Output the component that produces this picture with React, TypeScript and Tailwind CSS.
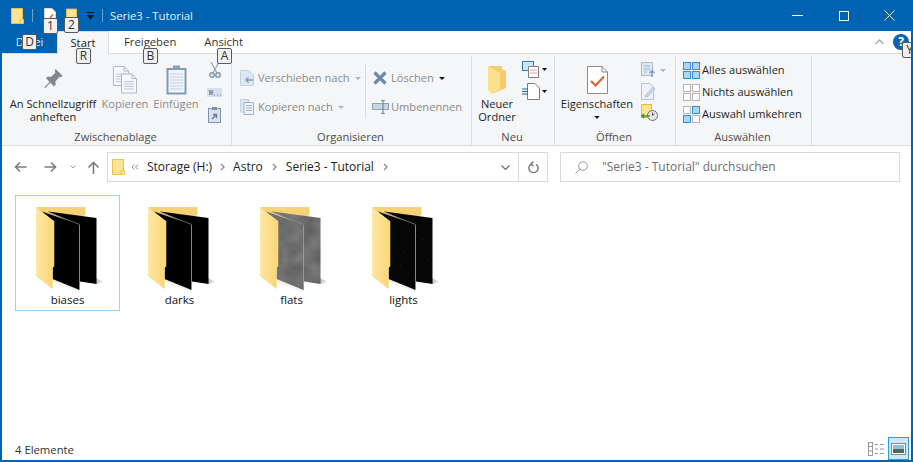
import type { ReactNode } from 'react'

const font = { fontFamily: '"Open Sans", "Noto Sans", sans-serif' }

function KeyTip({ label, className }: { label: string; className: string }) {
  return (
    <span className={`absolute z-10 flex h-[16px] w-[15px] items-center justify-center rounded-[2px] border border-[#5a5a5a] bg-[#f0f0f0] text-[12px] leading-none text-[#333] ${className}`}>
      {label}
    </span>
  )
}

function SmallFolder({ className }: { className: string }) {
  return (
    <svg className={className} viewBox="0 0 13 16">
      <path d="M0.5 0.5H11.5V15.5H0.5Z" fill="#fde48f" stroke="#ecc14f" />
      <path d="M9 11.5H12.5V15.5H9Z" fill="#fde48f" stroke="#ecc14f" />
    </svg>
  )
}

function BigFolder({ page, dots, noise }: { page: string; dots?: boolean; noise?: boolean }) {
  return (
    <svg className="h-[86px] w-[66px]" viewBox="0 0 66 86">
      <defs>
        <linearGradient id="shade" x1="0" x2="1" y1="0" y2="0">
          <stop offset="0" stopColor="#000" stopOpacity="0.25" />
          <stop offset="1" stopColor="#000" stopOpacity="0" />
        </linearGradient>
        <linearGradient id="flap" x1="0" x2="1" y1="0" y2="0.1">
          <stop offset="0" stopColor="#fee8a6" />
          <stop offset="1" stopColor="#f9d778" />
        </linearGradient>
        <filter id="blotch" x="0" y="0" width="100%" height="100%">
          <feTurbulence type="fractalNoise" baseFrequency="0.07" numOctaves="2" seed="4" />
          <feColorMatrix values="0 0 0 0 0  0 0 0 0 0  0 0 0 0 0  0.35 0 0 0 -0.08" />
        </filter>
        <clipPath id="pages">
          <path d="M12 4.5L60.5 11V77L44 74.5V19Z" />
          <path d="M6 4.5L43.5 17.5V83L16.5 72V28Z" />
        </clipPath>
      </defs>
      <path d="M0 0H49.5V8L16 30Z" fill="#f5d375" />
      <path d="M60 71L69 75L60 77Z" fill="url(#shade)" />
      <path d="M16 72L43 83L43 85L16 75Z" fill="#000" opacity="0.06" />
      <path d="M12 4.5L60.5 11V77L44 74.5V19Z" fill={page} />
      <path d="M6 4.5L43.5 17.5V83L16.5 72V28Z" fill={page} />
      {noise && (
        <g clipPath="url(#pages)">
          <rect width="66" height="86" filter="url(#blotch)" />
        </g>
      )}
      <path d="M12 5L43.5 17.5V83" fill="none" stroke="#8c8c8c" strokeWidth="0.7" />
      {dots && (
        <g fill="#5f5f5f">
          <rect x="24" y="30" width="0.6" height="0.6" />
          <rect x="31" y="44" width="0.6" height="0.6" />
          <rect x="38" y="26" width="0.6" height="0.6" />
          <rect x="28" y="58" width="0.6" height="0.6" />
          <rect x="50" y="32" width="0.6" height="0.6" />
          <rect x="55" y="52" width="0.6" height="0.6" />
          <rect x="36" y="66" width="0.6" height="0.6" />
        </g>
      )}
      <path d="M0 0L18.3 14.3V59.3L16.7 61V82L0 69.3Z" fill="url(#flap)" />
    </svg>
  )
}

function FolderTile({ name, page, selected, dots, noise }: { name: string; page: string; selected?: boolean; dots?: boolean; noise?: boolean }) {
  return (
    <div className={`flex h-[116px] w-[105px] flex-col items-center border pt-[11px] ${selected ? 'border-[#99d1ff]' : 'border-transparent'}`}>
      <div className="ml-[2px] h-[85px]">
        <BigFolder page={page} dots={dots} noise={noise} />
      </div>
      <span className="text-[11.5px] leading-[16px] text-[#111]">{name}</span>
    </div>
  )
}

function Group({ label, width, children }: { label: string; width: string; children: ReactNode }) {
  return (
    <div className={`relative flex flex-col border-r border-[#dcdddf] ${width}`}>
      <div className="flex h-[73px]">{children}</div>
      <div className="pr-[2px] text-center text-[11.1px] leading-[15px] text-[#4c4c4c]">{label}</div>
    </div>
  )
}

function LargeButton({ icon, lines, disabled, width }: { icon: ReactNode; lines: string[]; disabled?: boolean; width: string }) {
  return (
    <div className={`flex flex-col items-center pt-[6px] text-[11.1px] leading-[13px] ${width} ${disabled ? 'text-[#8a8a8a]' : 'text-[#1e1e1e]'}`}>
      <div className="flex h-[35px] items-center">{icon}</div>
      {lines.map(line => (
        <span key={line} className="whitespace-nowrap">{line}</span>
      ))}
    </div>
  )
}

function SmallButton({ icon, label, disabled, caret }: { icon: ReactNode; label: string; disabled?: boolean; caret?: string }) {
  return (
    <div className={`flex h-[22px] items-center whitespace-nowrap text-[11.1px] ${disabled ? 'text-[#8a8a8a]' : 'text-[#1e1e1e]'}`}>
      <span className="flex w-[20px] items-center justify-center">{icon}</span>
      <span className="ml-[1px]">{label}</span>
      {caret && (
        <svg className="ml-[5px] h-[3px] w-[6px]" viewBox="0 0 6 3">
          <path d="M0 0H6L3 3Z" fill={caret} />
        </svg>
      )}
    </div>
  )
}

function SelectIcon({ cells }: { cells: boolean[] }) {
  return (
    <svg className="h-[17px] w-[17px]" viewBox="0 0 17 17">
      {cells.map((on, i) => {
        const x = i % 2 === 0 ? 0.5 : 9.5
        const y = i < 2 ? 0.5 : 9.5
        return <rect key={i} x={x} y={y} width="7" height="7" fill={on ? '#a8d7f7' : '#fff'} stroke={on ? '#2e8fd6' : '#b4b4b4'} />
      })}
    </svg>
  )
}

function Caret({ className }: { className: string }) {
  return (
    <svg className={className} viewBox="0 0 7 4">
      <path d="M0 0H7L3.5 4Z" fill="#111" />
    </svg>
  )
}

function Crumb({ className }: { className: string }) {
  return (
    <svg className={`h-[8px] w-[5px] ${className}`} viewBox="0 0 5 8">
      <path d="M1 1L4 4L1 7" fill="none" stroke="#8a8a8a" strokeWidth="1.3" />
    </svg>
  )
}

function PageIcon({ className, fill = '#f7f9fc', stroke = '#adb9c9' }: { className: string; fill?: string; stroke?: string }) {
  return (
    <svg className={className} viewBox="0 0 16 20">
      <path d="M0.5 0.5H11L15.5 5V19.5H0.5Z" fill={fill} stroke={stroke} />
      <path d="M11 0.5V5H15.5" fill="none" stroke={stroke} />
      <path d="M3 8H13M3 10.5H13M3 13H13M3 15.5H13" stroke={stroke} strokeWidth="0.8" />
    </svg>
  )
}

export default function App() {
  return (
    <div className="relative flex h-[462px] w-[913px] flex-col overflow-hidden border-x-2 border-b-2 border-[#0063b1] bg-white" style={font}>
      <div className="flex h-[31px] shrink-0 items-center bg-[#0063b1] text-white">
        <SmallFolder className="ml-[9px] h-[16px] w-[13px]" />
        <span className="ml-[8px] h-[13px] w-px bg-[#6ea3d0]" />
        <svg className="ml-[11px] h-[15px] w-[12px]" viewBox="0 0 12 15">
          <path d="M0.5 0.5H8L11.5 4V14.5H0.5Z" fill="#fff" stroke="#d8d8d8" />
          <path d="M6 10L9 6.5" stroke="#e05a2b" strokeWidth="1.4" />
        </svg>
        <SmallFolder className="ml-[10px] h-[16px] w-[12px]" />
        <svg className="ml-[9px] h-[8px] w-[7px]" viewBox="0 0 7 8">
          <path d="M0 0H7V1H0ZM0 3H7L3.5 7.5Z" fill="#111" />
        </svg>
        <span className="ml-[8px] h-[13px] w-px bg-[#6ea3d0]" />
        <span className="ml-[7px] pt-[1px] text-[11.3px] leading-none text-[#e8f0f8]">Serie3 - Tutorial</span>
        <div className="ml-auto flex h-full">
          <span className="flex w-[46px] items-center justify-center pr-[1px]">
            <span className="h-px w-[11px] bg-white" />
          </span>
          <span className="flex w-[46px] items-center justify-center pr-[1px]">
            <span className="h-[10px] w-[10px] border border-white" />
          </span>
          <span className="flex w-[44px] items-center justify-center">
            <svg className="h-[11px] w-[11px]" viewBox="0 0 11 11">
              <path d="M0.5 0.5L10.5 10.5M10.5 0.5L0.5 10.5" stroke="#fff" />
            </svg>
          </span>
        </div>
      </div>

      <div className="relative flex h-[23px] shrink-0 items-stretch border-b border-[#dadbdc] text-[11.3px]">
        <span className="flex w-[55px] items-center justify-center bg-[#0063b1] pt-[1px] text-[#dbe9f5]">Datei</span>
        <span className="z-10 -mb-px flex w-[52px] items-center justify-center border-x border-t border-[#dadbdc] bg-[#f5f6f7] pt-[1px] text-[#222]">Start</span>
        <span className="ml-[15px] flex items-center pt-[1px] text-[#333]">Freigeben</span>
        <span className="ml-[28px] flex items-center pt-[1px] text-[#333]">Ansicht</span>
        <svg className="absolute left-[873px] top-[8px] h-[6px] w-[9px]" viewBox="0 0 9 6">
          <path d="M0.5 5L4.5 1L8.5 5" fill="none" stroke="#a8a8a8" strokeWidth="1.3" />
        </svg>
        <span className="absolute left-[891px] top-[3px] flex h-[16px] w-[16px] items-center justify-center rounded-full bg-[#0f62ae] text-[12px] font-bold leading-none text-white">?</span>
      </div>

      <div className="flex h-[92px] shrink-0 border-b border-[#dadbdc] bg-[#f5f6f7] pt-[2px]">
        <Group label="Zwischenablage" width="w-[230px]">
          <div className="flex pl-[5px]">
            <LargeButton
              width="w-[92px]"
              lines={['An Schnellzugriff', 'anheften']}
              icon={
                <svg className="h-[21px] w-[21px]" viewBox="0 0 23 24">
                  <path d="M14 0L22 8L19.5 9.5L18 9L13.5 14.5L14 18L12 20L8 15.5L2 22L1 21L7 14.5L3 10.5L5 8.5L8.5 9L13.5 4.5L13 2Z" fill="#80868d" />
                </svg>
              }
            />
            <LargeButton
              width="w-[52px]"
              disabled
              lines={['Kopieren']}
              icon={
                <span className="relative block h-[29px] w-[24px]">
                  <PageIcon className="absolute left-0 top-0 h-[22px] w-[16px]" />
                  <PageIcon className="absolute left-[8px] top-[8px] h-[21px] w-[16px]" />
                </span>
              }
            />
            <LargeButton
              width="w-[50px]"
              disabled
              lines={['Einfügen']}
              icon={
                <svg className="h-[30px] w-[21px]" viewBox="0 0 21 30">
                  <rect x="0.5" y="3" width="20" height="26.5" fill="#7f9bb9" />
                  <rect x="2.5" y="5" width="16" height="22.5" fill="#f1f4fa" />
                  <path d="M4 9H17M4 12H17M4 15H17M4 18H17M4 21H17M4 24H17" stroke="#c5d0e2" />
                  <rect x="7" y="0.5" width="7" height="4" fill="#8d9fb3" />
                </svg>
              }
            />
            <div className="ml-[6px] flex flex-col items-center pt-[6px]">
              <svg className="h-[16px] w-[12px]" viewBox="0 0 12 16">
                <path d="M2 0L8 11M10 0L4 11" stroke="#99a3ad" strokeWidth="1.2" />
                <circle cx="3" cy="13" r="2.3" fill="#dbe3ec" stroke="#7d90a6" strokeWidth="1.3" />
                <circle cx="9" cy="13" r="2.3" fill="#dbe3ec" stroke="#7d90a6" strokeWidth="1.3" />
              </svg>
              <svg className="mt-[10px] h-[9px] w-[15px]" viewBox="0 0 15 9">
                <rect width="15" height="9" fill="#d5dff0" />
                <path d="M2 2L3 7L4 2L5 7L6 2M7 7H8M10 7H11M13 7H14" fill="none" stroke="#6f7f95" strokeWidth="0.8" />
              </svg>
              <svg className="mt-[10px] h-[16px] w-[13px]" viewBox="0 0 13 16">
                <rect x="0.5" y="1.5" width="12" height="14" fill="#d8e1ee" stroke="#7f90a8" />
                <rect x="4" y="0" width="5" height="3" fill="#7f90a8" />
                <path d="M4 12L8 8M5 7.5H8.5V11" fill="none" stroke="#6a7b93" strokeWidth="1.4" />
              </svg>
            </div>
          </div>
        </Group>

        <Group label="Organisieren" width="w-[240px]">
          <div className="flex w-[133px] flex-col gap-[7px] pl-[5px] pt-[11px]">
            <SmallButton
              disabled
              caret="#b5b5b5"
              label="Verschieben nach"
              icon={
                <svg className="h-[16px] w-[14px]" viewBox="0 0 14 16">
                  <path d="M0.5 0.5H9L13.5 5V15.5H0.5Z" fill="#dce6f4" stroke="#c5d2e2" />
                  <path d="M13 10H6M8.5 7.5L6 10L8.5 12.5" fill="none" stroke="#8e9aaa" strokeWidth="1.5" />
                </svg>
              }
            />
            <SmallButton
              disabled
              caret="#b5b5b5"
              label="Kopieren nach"
              icon={
                <svg className="h-[16px] w-[14px]" viewBox="0 0 14 16">
                  <path d="M0.5 0.5H9V13H0.5Z" fill="#dce6f4" stroke="#c5d2e2" />
                  <path d="M4 3.5H13.5V15.5H4Z" fill="#eef3fa" stroke="#9fb0c6" />
                  <path d="M6 6.5H12M6 9H12M6 11.5H12" stroke="#9fb0c6" />
                </svg>
              }
            />
          </div>
          <span className="mt-[8px] h-[54px] w-px bg-[#dcdddf]" />
          <div className="flex flex-col gap-[7px] pl-[4px] pt-[11px]">
            <SmallButton
              caret="#111"
              label="Löschen"
              disabled
              icon={
                <svg className="h-[14px] w-[14px]" viewBox="0 0 14 14">
                  <path d="M1.5 1.5L12.5 12.5M12.5 1.5L1.5 12.5" stroke="#7089a8" strokeWidth="3.2" />
                </svg>
              }
            />
            <SmallButton
              disabled
              label="Umbenennen"
              icon={
                <svg className="h-[14px] w-[17px]" viewBox="0 0 17 14">
                  <rect x="0.5" y="3.5" width="16" height="6" fill="#c9d4e3" stroke="#8fa2ba" />
                  <path d="M11 1V13M9 0.5H13M9 13.5H13" stroke="#7189a7" strokeWidth="1.2" />
                </svg>
              }
            />
          </div>
        </Group>

        <Group label="Neu" width="w-[83px]">
          <LargeButton
            width="w-[50px]"
            lines={['Neuer', 'Ordner']}
            icon={
              <svg className="h-[28px] w-[18px]" viewBox="0 0 18 28">
                <path d="M0 0H14V3L18 5V22L4 28V26L0 22Z" fill="#f3cd6a" />
                <path d="M0 0L12 7V23L4 28L0 24Z" fill="#fde08d" />
              </svg>
            }
          />
          <div className="flex flex-col pt-[3px]">
            <div className="flex h-[20px] items-center">
              <svg className="h-[17px] w-[18px]" viewBox="0 0 18 17">
                <rect x="0.5" y="0.5" width="11" height="9" fill="#cfe3f5" stroke="#2e7cb8" />
                <path d="M6.5 5.5H16.5V16.5H6.5Z" fill="#fff" stroke="#7d7d7d" />
                <path d="M8 9H15M8 12H15" stroke="#e4a0a0" />
              </svg>
              <Caret className="ml-[2px] h-[3px] w-[5px]" />
            </div>
            <div className="mt-[2px] flex h-[20px] items-center">
              <svg className="h-[17px] w-[18px]" viewBox="0 0 18 17">
                <path d="M5.5 0.5H13L17.5 5V16.5H5.5Z" fill="#fff" stroke="#7d7d7d" />
                <path d="M0 6H6M0 8.5H6M0 11H6" stroke="#1f63a8" />
              </svg>
              <Caret className="ml-[2px] h-[3px] w-[5px]" />
            </div>
          </div>
        </Group>

        <Group label="Öffnen" width="w-[121px]">
          <LargeButton
            width="w-[84px]"
            lines={['Eigenschaften']}
            icon={
              <svg className="h-[28px] w-[21px]" viewBox="0 0 21 28">
                <path d="M0.5 0.5H15L20.5 6V27.5H0.5Z" fill="#fff" stroke="#8a8a8a" />
                <path d="M15 0.5V6H20.5" fill="none" stroke="#8a8a8a" />
                <path d="M4 15L8.5 19.5L17 10.5" fill="none" stroke="#e6602a" strokeWidth="2.2" />
              </svg>
            }
          />
          <div className="flex flex-col items-start pl-[2px] pt-[6px]">
            <div className="flex h-[16px] items-center">
              <svg className="h-[16px] w-[15px]" viewBox="0 0 15 16">
                <rect x="0.5" y="0.5" width="11" height="13" fill="#dfe7f3" stroke="#aebdd1" />
                <path d="M3 4H9M3 7H9M3 10H6" stroke="#9fb0c6" />
                <path d="M11 15V9M8.5 11L11 8.5L13.5 11" fill="none" stroke="#8aa1bd" strokeWidth="1.5" />
              </svg>
              <svg className="ml-[4px] h-[3px] w-[6px]" viewBox="0 0 6 3">
                <path d="M0 0H6L3 3Z" fill="#b5b5b5" />
              </svg>
            </div>
            <svg className="mt-[5px] h-[17px] w-[15px]" viewBox="0 0 15 17">
              <path d="M0.5 0.5H9L12.5 4V16.5H0.5Z" fill="#eff3f9" stroke="#b5c3d4" />
              <path d="M5 12L12 4L14 6L7 13.5L4 14Z" fill="#c8d7e9" stroke="#9fb4cc" strokeWidth="0.7" />
            </svg>
            <svg className="mt-[4px] h-[17px] w-[17px]" viewBox="0 0 17 17">
              <rect x="0.5" y="0.5" width="10" height="13" fill="#fde48f" stroke="#e5bb45" />
              <circle cx="11.5" cy="11.5" r="5" fill="#e8e8e8" stroke="#6f6f6f" />
              <path d="M11.5 8.5V11.5L13.5 10" fill="none" stroke="#555" />
              <path d="M2 12H9M3 10L1 12L3 14" fill="none" stroke="#3d9a3d" strokeWidth="1.7" />
            </svg>
          </div>
          <Caret className="absolute left-[39px] top-[60px] h-[3px] w-[6px]" />
        </Group>

        <Group label="Auswählen" width="w-[136px]">
          <div className="flex flex-col pl-[5px] pt-[3px]">
            <SmallButton label="Alles auswählen" icon={<SelectIcon cells={[true, true, true, true]} />} />
            <SmallButton label="Nichts auswählen" icon={<SelectIcon cells={[false, false, false, false]} />} />
            <SmallButton label="Auswahl umkehren" icon={<SelectIcon cells={[false, true, true, false]} />} />
          </div>
        </Group>
      </div>

      <div className="flex h-[49px] shrink-0 items-center pb-[13px] pt-[6px]">
        <div className="flex w-[105px] items-center">
          <svg className="ml-[12px] h-[12px] w-[13px]" viewBox="0 0 13 12">
            <path d="M12.5 6H1.5M6 1.5L1.5 6L6 10.5" fill="none" stroke="#7d7d7d" strokeWidth="1.6" />
          </svg>
          <svg className="ml-[17px] h-[12px] w-[13px]" viewBox="0 0 13 12">
            <path d="M0.5 6H11.5M7 1.5L11.5 6L7 10.5" fill="none" stroke="#7d7d7d" strokeWidth="1.6" />
          </svg>
          <svg className="ml-[13px] h-[4px] w-[6px]" viewBox="0 0 6 4">
            <path d="M0.5 0.5L3 3L5.5 0.5" fill="none" stroke="#9a9a9a" />
          </svg>
          <svg className="ml-[11px] h-[13px] w-[13px]" viewBox="0 0 13 13">
            <path d="M6.5 13V2M1.5 6.5L6.5 1.5L11.5 6.5" fill="none" stroke="#7d7d7d" strokeWidth="1.6" />
          </svg>
        </div>
        <div className="flex h-[30px] w-[441px] items-center border border-[#d9d9d9] text-[12px] text-[#222]">
          <SmallFolder className="ml-[4px] h-[16px] w-[13px]" />
          <svg className="ml-[6px] h-[6px] w-[8px]" viewBox="0 0 8 6">
            <path d="M3.5 0.5L1 3L3.5 5.5M7 0.5L4.5 3L7 5.5" fill="none" stroke="#8a8a8a" />
          </svg>
          <span className="ml-[8px]">Storage (H:)</span>
          <Crumb className="mx-[8px]" />
          <span>Astro</span>
          <Crumb className="mx-[9px]" />
          <span>Serie3 - Tutorial</span>
          <Crumb className="ml-[9px]" />
          <svg className="ml-auto mr-[8px] h-[5px] w-[9px]" viewBox="0 0 9 5">
            <path d="M0.5 0.5L4.5 4.5L8.5 0.5" fill="none" stroke="#6d6d6d" strokeWidth="1.2" />
          </svg>
          <span className="flex h-full w-[29px] items-center justify-center border-l border-[#d9d9d9]">
            <svg className="h-[13px] w-[11px]" viewBox="0 0 11 13">
              <path d="M3 3.2A4.6 4.6 0 1 0 8 3.2M5.5 0.5L3 3L5.5 5" fill="none" stroke="#6d6d6d" strokeWidth="1.3" />
            </svg>
          </span>
        </div>
        <div className="ml-[12px] flex h-[30px] w-[340px] items-center border border-[#d9d9d9] text-[12px] text-[#6d6d6d]">
          <svg className="ml-[14px] h-[13px] w-[13px]" viewBox="0 0 13 13">
            <circle cx="8" cy="5" r="4.3" fill="none" stroke="#9a9a9a" />
            <path d="M5 8L0.5 12.5" stroke="#9a9a9a" />
          </svg>
          <span className="ml-[14px]">"Serie3 - Tutorial" durchsuchen</span>
        </div>
      </div>

      <div className="flex min-h-0 flex-1 gap-[7px] pl-[13px]">
        <FolderTile name="biases" page="#000" selected />
        <FolderTile name="darks" page="#000" />
        <FolderTile name="flats" page="#7a7a7a" noise />
        <FolderTile name="lights" page="#060606" dots />
      </div>

      <div className="flex h-[23px] shrink-0 items-center pl-[13px] text-[11.3px] text-[#333]">
        <span className="pt-[3px]">4 Elemente</span>
        <div className="ml-auto mr-[2px] flex items-center gap-[3px]">
          <svg className="h-[14px] w-[17px]" viewBox="0 0 17 14">
            <rect x="0.5" y="0.5" width="4" height="13" fill="none" stroke="#9a9a9a" />
            <path d="M0.5 4.5H4.5M0.5 9H4.5M7 2.5H10M12 2.5H16M7 7H10M12 7H16M7 11.5H10M12 11.5H16" stroke="#9a9a9a" />
          </svg>
          <span className="flex h-[23px] w-[21px] items-center justify-center border border-[#26a0da] bg-[#cce8ff]">
            <svg className="h-[12px] w-[15px]" viewBox="0 0 15 12">
              <rect x="0.5" y="0.5" width="14" height="11" fill="#fff" stroke="#8a8a8a" />
              <rect x="2" y="2" width="11" height="4" fill="#8fc0dc" />
              <rect x="2" y="6" width="11" height="4" fill="#4a6b58" />
            </svg>
          </span>
        </div>
      </div>

      <KeyTip label="1" className="left-[41px] top-[18px]" />
      <KeyTip label="2" className="left-[62px] top-[17px]" />
      <KeyTip label="D" className="left-[20px] top-[34px]" />
      <KeyTip label="R" className="left-[74px] top-[48px]" />
      <KeyTip label="B" className="left-[141px] top-[48px]" />
      <KeyTip label="A" className="left-[215px] top-[48px]" />
      <KeyTip label="Y" className="left-[900px] top-[42px]" />
    </div>
  )
}
